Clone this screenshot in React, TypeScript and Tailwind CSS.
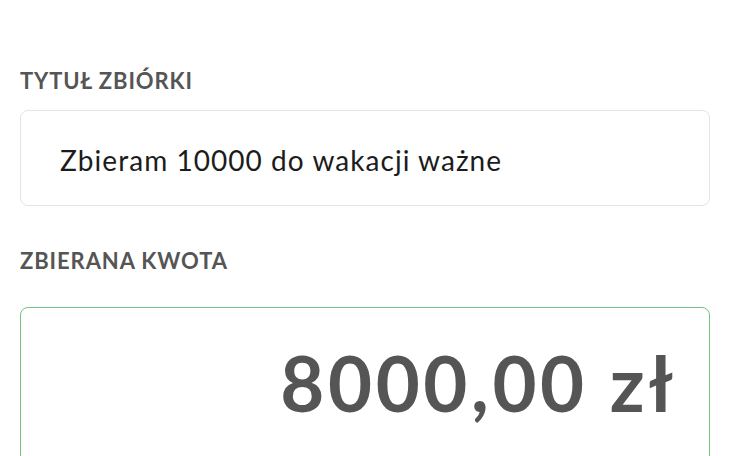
export default function App() {
  return (
    <div className="min-h-[456px] overflow-hidden bg-white px-[20px] pt-[67px] font-['Lato',sans-serif]">
      <p className="text-[22px] font-bold leading-[28px] tracking-[0.9px] text-[#555555]">TYTUŁ ZBIÓRKI</p>
      <div className="mt-[15px] flex h-[96px] items-center rounded-[8px] border border-[#e4e4e4] pl-[39px] pt-[3px]">
        <span className="text-[28px] leading-[34px] tracking-[1.05px] text-[#1c1c1c]">Zbieram 10000 do wakacji ważne</span>
      </div>

      <p className="mt-[41px] text-[22px] font-bold leading-[28px] tracking-[0.9px] text-[#555555]">ZBIERANA KWOTA</p>
      <div className="mt-[32px] h-[160px] rounded-[8px] border-[1.5px] border-[#74c383] pr-[32px] pt-[37px] text-right">
        <span className="text-[76px] font-bold leading-[76px] tracking-[3.6px] text-[#555555]">8000,00 zł</span>
      </div>
    </div>
  );
}
